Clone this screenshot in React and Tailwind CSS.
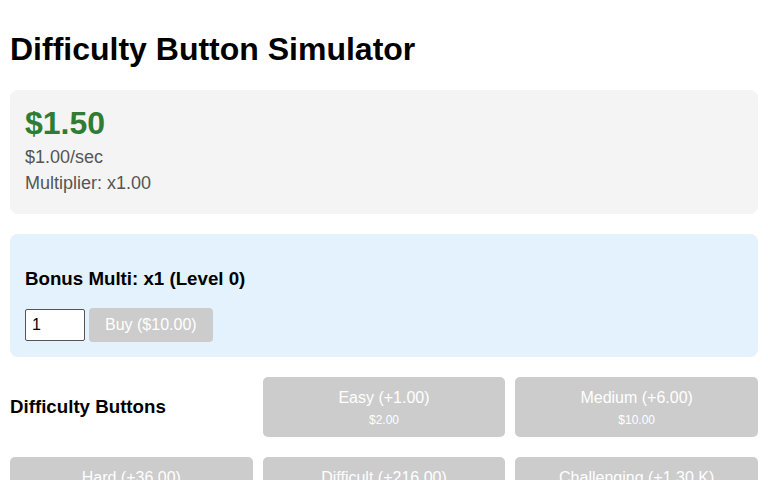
import React, { useState } from 'react';

const buttons = [
  { name: 'Easy', gain: '+1.00', cost: '$2.00' },
  { name: 'Medium', gain: '+6.00', cost: '$10.00' },
  { name: 'Hard', gain: '+36.00', cost: '$50.00' },
  { name: 'Difficult', gain: '+216.00', cost: '$250.00' },
  { name: 'Challenging', gain: '+1.30 K', cost: '$1.25 K' },
];

const DiffButton = ({ b }) => (
  <button
    disabled
    className="h-[60px] bg-[#cccccc] rounded-[5px] text-white flex flex-col items-center pt-[12px]"
  >
    <span className="text-[16px] leading-[18px]">
      {b.name} ({b.gain})
    </span>
    <span className="text-[12px] leading-[14px] mt-[6px]">{b.cost}</span>
  </button>
);

const App = () => {
  const [amount, setAmount] = useState('1');

  return (
    <div className="p-[10px] bg-white text-black font-['Liberation_Sans',Arial,sans-serif]">
      <h1 className="text-[32px] font-bold leading-[37px] my-[21.44px]">Difficulty Button Simulator</h1>

      <div className="bg-[#f4f4f4] rounded-lg p-[15px] mb-[20px]">
        <div className="text-[32px] font-bold leading-[37px] text-[#2e7d32]">$1.50</div>
        <p className="text-[18px] leading-[21px] text-[#555555] my-[5px]">$1.00/sec</p>
        <p className="text-[18px] leading-[21px] text-[#555555] my-[5px]">Multiplier: x1.00</p>
      </div>

      <div className="bg-[#e3f2fd] rounded-lg p-[15px] mb-[20px]">
        <h3 className="text-[18.72px] font-bold leading-[21.5px] my-[18.72px]">Bonus Multi: x1 (Level 0)</h3>
        <div className="flex items-center gap-[4px]">
          <input
            type="number"
            value={amount}
            onChange={(e) => setAmount(e.target.value)}
            className="w-[60px] h-[32px] border border-[#555555] rounded-[2px] bg-white px-[6px] text-[16px] outline-none [appearance:textfield]"
          />
          <button disabled className="h-[34px] px-4 bg-[#cccccc] rounded-[4px] text-white text-[16px]">
            Buy ($10.00)
          </button>
        </div>
      </div>

      <div className="grid grid-cols-3 gap-x-[10px] gap-y-[20px]">
        <h3 className="self-center text-[18.72px] font-bold leading-[21.5px]">Difficulty Buttons</h3>
        {buttons.map((b) => (
          <DiffButton key={b.name} b={b} />
        ))}
      </div>
    </div>
  );
};

export default App;
